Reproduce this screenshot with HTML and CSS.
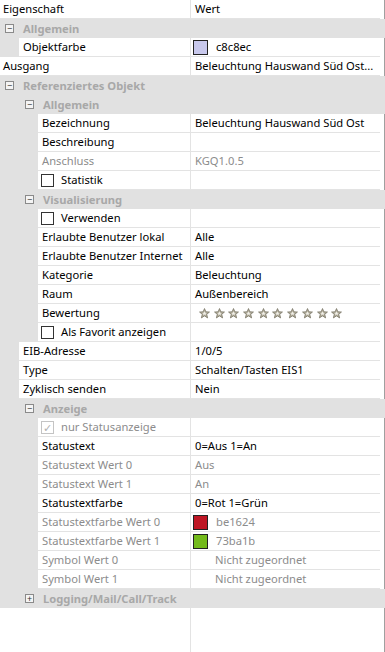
FILE: index.html
```html
<!DOCTYPE html>
<html lang="de">
<head>
    <meta charset="UTF-8">
    <title>Eigenschaften</title>
    <link rel="stylesheet" href="styles.css">
</head>
<body>

<svg width="0" height="0" class="defs">
    <defs>
        <symbol id="star" viewBox="0 0 12 12">
            <polygon points="6,0.6 7.5,4.2 11.4,4.4 8.4,6.9 9.4,10.8 6,8.6 2.6,10.8 3.6,6.9 0.6,4.4 4.5,4.2" fill="#b3ae9c" stroke="#7c7868" stroke-width="0.9" stroke-linejoin="round"/>
            <polygon points="6,3.6 6.7,5.3 8.3,5.4 7.1,6.4 7.5,8 6,7.1 4.5,8 4.9,6.4 3.7,5.4 5.3,5.3" fill="#f1efe8"/>
        </symbol>
    </defs>
</svg>

<div class="grid">
    <div class="row head">
        <div class="name">Eigenschaft</div>
        <div class="value">Wert</div>
    </div>

    <div class="row cat l0"><span class="tog">&minus;</span>Allgemein</div>
    <div class="row">
        <div class="indent i1"></div>
        <div class="name">Objektfarbe</div>
        <div class="value"><span class="swatch" style="background:#c8c8ec"></span>c8c8ec</div>
    </div>
    <div class="row">
        <div class="name">Ausgang</div>
        <div class="value">Beleuchtung Hauswand Süd Ost...</div>
    </div>

    <div class="row cat l0"><span class="tog">&minus;</span>Referenziertes Objekt</div>
    <div class="row cat l1"><span class="tog">&minus;</span>Allgemein</div>
    <div class="row"><div class="indent i2"></div><div class="name">Bezeichnung</div><div class="value">Beleuchtung Hauswand Süd Ost</div></div>
    <div class="row"><div class="indent i2"></div><div class="name">Beschreibung</div><div class="value"></div></div>
    <div class="row off"><div class="indent i2"></div><div class="name">Anschluss</div><div class="value">KGQ1.0.5</div></div>
    <div class="row"><div class="indent i2"></div><div class="name chk"><span class="box"></span>Statistik</div><div class="value"></div></div>

    <div class="row cat l1"><span class="tog">&minus;</span>Visualisierung</div>
    <div class="row"><div class="indent i2"></div><div class="name chk"><span class="box"></span>Verwenden</div><div class="value"></div></div>
    <div class="row"><div class="indent i2"></div><div class="name">Erlaubte Benutzer lokal</div><div class="value">Alle</div></div>
    <div class="row"><div class="indent i2"></div><div class="name">Erlaubte Benutzer Internet</div><div class="value">Alle</div></div>
    <div class="row"><div class="indent i2"></div><div class="name">Kategorie</div><div class="value">Beleuchtung</div></div>
    <div class="row"><div class="indent i2"></div><div class="name">Raum</div><div class="value">Außenbereich</div></div>
    <div class="row">
        <div class="indent i2"></div><div class="name">Bewertung</div>
        <div class="value stars">
            <svg><use href="#star"/></svg><svg><use href="#star"/></svg><svg><use href="#star"/></svg><svg><use href="#star"/></svg><svg><use href="#star"/></svg><svg><use href="#star"/></svg><svg><use href="#star"/></svg><svg><use href="#star"/></svg><svg><use href="#star"/></svg><svg><use href="#star"/></svg>
        </div>
    </div>
    <div class="row"><div class="indent i2"></div><div class="name chk"><span class="box"></span>Als Favorit anzeigen</div><div class="value"></div></div>

    <div class="row"><div class="indent i1"></div><div class="name">EIB-Adresse</div><div class="value">1/0/5</div></div>
    <div class="row"><div class="indent i1"></div><div class="name">Type</div><div class="value">Schalten/Tasten EIS1</div></div>
    <div class="row"><div class="indent i1"></div><div class="name">Zyklisch senden</div><div class="value">Nein</div></div>

    <div class="row cat l1"><span class="tog">&minus;</span>Anzeige</div>
    <div class="row off"><div class="indent i2"></div><div class="name chk"><span class="box checked">&#10003;</span>nur Statusanzeige</div><div class="value"></div></div>
    <div class="row"><div class="indent i2"></div><div class="name">Statustext</div><div class="value">0=Aus 1=An</div></div>
    <div class="row off"><div class="indent i2"></div><div class="name">Statustext Wert 0</div><div class="value">Aus</div></div>
    <div class="row off"><div class="indent i2"></div><div class="name">Statustext Wert 1</div><div class="value">An</div></div>
    <div class="row"><div class="indent i2"></div><div class="name">Statustextfarbe</div><div class="value">0=Rot 1=Grün</div></div>
    <div class="row off"><div class="indent i2"></div><div class="name">Statustextfarbe Wert 0</div><div class="value"><span class="swatch" style="background:#be1624"></span>be1624</div></div>
    <div class="row off"><div class="indent i2"></div><div class="name">Statustextfarbe Wert 1</div><div class="value"><span class="swatch" style="background:#73ba1b"></span>73ba1b</div></div>
    <div class="row off"><div class="indent i2"></div><div class="name">Symbol Wert 0</div><div class="value far">Nicht zugeordnet</div></div>
    <div class="row off"><div class="indent i2"></div><div class="name">Symbol Wert 1</div><div class="value far">Nicht zugeordnet</div></div>

    <div class="row cat l1"><span class="tog">+</span>Logging/Mail/Call/Track</div>

    <div class="rest"><div class="name"></div></div>
</div>

</body>
</html>
```

FILE: styles.css
```css
body {
    margin: 0;
    font-family: "Noto Sans", "Open Sans", sans-serif;
    font-size: 11.2px;
    color: #000;
}
.defs {
    position: absolute;
}
.grid {
    width: 384px;
    height: 652px;
    border-right: 1px solid #a0a0a0;
    display: flex;
    flex-direction: column;
}
.row {
    display: flex;
    width: 380px;
    height: 19px;
    line-height: 18px;
    flex: none;
}
.indent {
    flex: none;
    background-color: #e1e1e1;
}
.i1 {
    width: 19px;
}
.i2 {
    width: 38px;
}
.name {
    flex: 1;
    min-width: 0;
    padding-left: 4px;
    border-right: 1px solid #e3e3e3;
    border-bottom: 1px solid #e3e3e3;
    white-space: nowrap;
    overflow: hidden;
}
.value {
    flex: none;
    width: 185px;
    padding-left: 4px;
    border-bottom: 1px solid #e3e3e3;
    white-space: nowrap;
    overflow: hidden;
    display: flex;
    align-items: center;
}
.head .name,
.row > .name:first-child {
    padding-left: 3px;
}
.off {
    color: #8c8c8c;
}
.cat {
    background-color: #e1e1e1;
    color: #a8a8a8;
    font-weight: bold;
    align-items: center;
}
.tog {
    width: 7px;
    height: 7px;
    border: 1px solid #8a8a8a;
    background: #f4f4f4;
    color: #333;
    font-weight: normal;
    font-size: 9px;
    line-height: 7px;
    text-align: center;
    margin-right: 9px;
}
.l0 {
    padding-left: 5px;
}
.l1 {
    padding-left: 25px;
}
.chk {
    display: flex;
    align-items: center;
    padding-left: 3px;
}
.box {
    width: 11px;
    height: 11px;
    border: 1px solid #333;
    background: #fff;
    margin-right: 7px;
    flex: none;
    font-size: 11px;
    line-height: 11px;
    text-align: center;
}
.box.checked {
    border-color: #c4c4c4;
    color: #b0b0b0;
}
.swatch {
    width: 13px;
    height: 13px;
    border: 1px solid #222;
    margin: 0 8px 0 -2px;
    flex: none;
}
.far {
    padding-left: 24px;
    width: 165px;
}
.stars {
    padding-left: 8px;
    width: 181px;
}
.stars svg {
    width: 11px;
    height: 11px;
    margin-right: 3.7px;
    flex: none;
}
.rest {
    flex: 1;
    display: flex;
    width: 380px;
}
.rest .name {
    flex: none;
    width: 186px;
    border-bottom: none;
}
```
